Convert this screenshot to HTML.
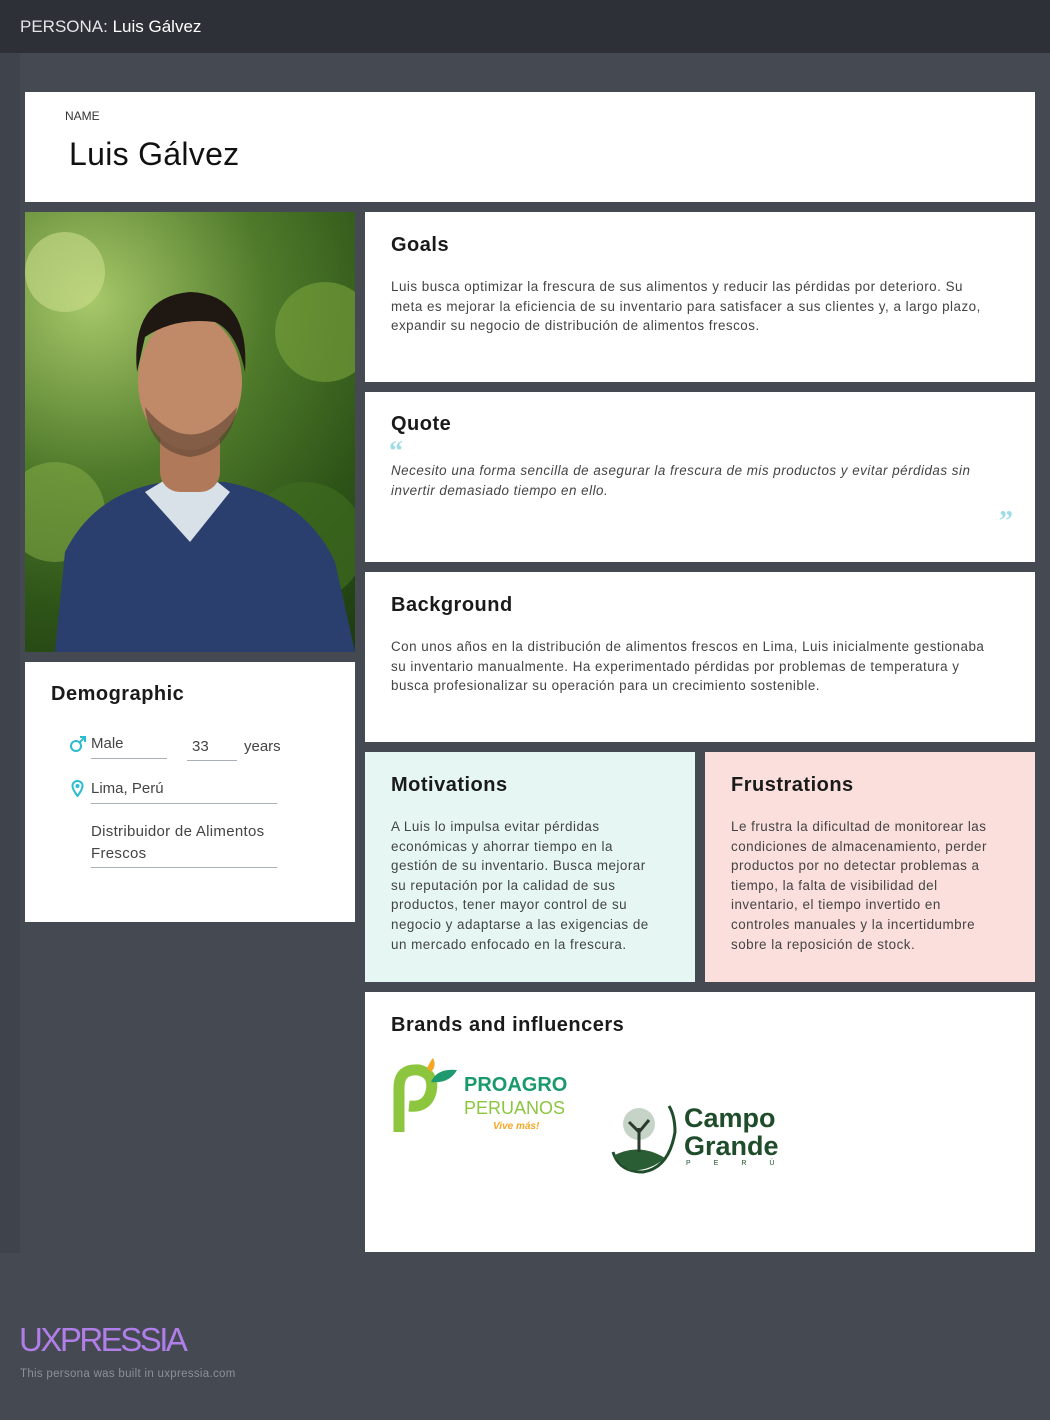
<!DOCTYPE html>
<html><head><meta charset="utf-8"><style>
*{margin:0;padding:0;box-sizing:border-box}
body{width:1050px;height:1420px;background:#454952;font-family:"Liberation Sans","DejaVu Sans",sans-serif;position:relative;overflow:hidden;color:#333}
.hdr{position:absolute;left:0;top:0;width:1050px;height:53px;background:#2e3038;color:#e4e5e8;font-size:17px;padding:17px 20px;font-weight:300}
.hdr span{color:#fff}
.card{position:absolute;background:#fff}
h2{font-size:20px;font-weight:600;color:#1a1a1a;letter-spacing:.5px}
p.t{font-size:13.4px;line-height:19.6px;color:#444;white-space:nowrap;letter-spacing:.5px}
.lbl{font-size:15px;color:#444}
.line{position:absolute;border-bottom:1px solid #aab0b8}
</style></head><body>
<div class="hdr">PERSONA: <span>Luis Gálvez</span></div>
<div style="position:absolute;left:0;top:53px;width:20px;height:1200px;background:#3f434b"></div>

<div class="card" style="left:25px;top:92px;width:1010px;height:110px">
<div style="position:absolute;left:40px;top:17px;font-size:12px;color:#333">NAME</div>
<div style="position:absolute;left:44px;top:44px;font-size:32px;color:#111;letter-spacing:.3px">Luis Gálvez</div>
</div>

<div style="position:absolute;left:25px;top:212px;width:330px;height:440px;overflow:hidden;background:radial-gradient(circle at 20% 20%,#a8c86a,#4f7a2a 40%,#2e5418 70%,#1e3a12)">
<svg width="330" height="440" viewBox="0 0 330 440">
<circle cx="40" cy="60" r="40" fill="#c9dc8a" opacity=".6"/><circle cx="300" cy="120" r="50" fill="#7aa33c" opacity=".6"/><circle cx="280" cy="330" r="60" fill="#3d6b20" opacity=".7"/><circle cx="30" cy="300" r="50" fill="#8ab04a" opacity=".5"/>
<path d="M30 440 L40 340 Q70 280 140 270 L200 270 Q280 285 310 350 L330 440Z" fill="#2a3f6e"/>
<path d="M120 280 L165 330 L205 280 L190 268 L140 268Z" fill="#d8e0e8"/>
<rect x="135" y="210" width="60" height="70" rx="20" fill="#b07a5a"/>
<ellipse cx="165" cy="170" rx="52" ry="68" fill="#c08a68"/>
<path d="M112 160 Q105 85 165 80 Q225 82 220 160 Q212 120 190 110 Q150 105 120 125Z" fill="#1e1712"/>
<path d="M120 195 Q165 250 212 195 Q205 240 165 245 Q125 240 120 195Z" fill="#5a4030" opacity=".6"/>
</svg></div>

<div class="card" style="left:25px;top:662px;width:330px;height:260px">
<h2 style="position:absolute;left:26px;top:21px">Demographic</h2>
<svg style="position:absolute;left:44px;top:73px" width="18" height="18" viewBox="0 0 18 18"><circle cx="7" cy="11" r="5" fill="none" stroke="#2bbcd0" stroke-width="2"/><path d="M10.5 7.5 L16 2 M11 2 H16 V7" fill="none" stroke="#2bbcd0" stroke-width="2"/></svg>
<div class="lbl" style="position:absolute;left:66px;top:73px">Male</div>
<div class="line" style="left:66px;top:96px;width:76px"></div>
<div class="lbl" style="position:absolute;left:167px;top:76px">33</div>
<div class="line" style="left:162px;top:98px;width:50px"></div>
<div class="lbl" style="position:absolute;left:219px;top:76px">years</div>
<svg style="position:absolute;left:46px;top:118px" width="13" height="17" viewBox="0 0 13 17"><path d="M6.5 1C3.5 1 1.5 3.3 1.5 6c0 3.5 5 10 5 10s5-6.5 5-10C11.5 3.3 9.5 1 6.5 1z" fill="none" stroke="#2bbcd0" stroke-width="2"/><circle cx="6.5" cy="6" r="2" fill="#2bbcd0"/></svg>
<div class="lbl" style="position:absolute;left:66px;top:118px">Lima, Perú</div>
<div class="line" style="left:66px;top:141px;width:186px"></div>
<div class="lbl" style="position:absolute;left:66px;top:159px;line-height:22px;letter-spacing:.3px">Distribuidor de Alimentos<br>Frescos</div>
<div class="line" style="left:66px;top:205px;width:186px"></div>
</div>

<div class="card" style="left:365px;top:212px;width:670px;height:170px">
<h2 style="position:absolute;left:26px;top:22px">Goals</h2>
<p class="t" style="position:absolute;left:26px;top:65px">Luis busca optimizar la frescura de sus alimentos y reducir las pérdidas por deterioro. Su<br>meta es mejorar la eficiencia de su inventario para satisfacer a sus clientes y, a largo plazo,<br>expandir su negocio de distribución de alimentos frescos.</p>
</div>

<div class="card" style="left:365px;top:392px;width:670px;height:170px">
<h2 style="position:absolute;left:26px;top:21px">Quote</h2>
<div style="position:absolute;left:24px;top:44px;color:#9fdde6;font-size:28px;font-family:'Liberation Serif',serif;font-weight:bold">“</div>
<p class="t" style="position:absolute;left:26px;top:69px;font-style:italic">Necesito una forma sencilla de asegurar la frescura de mis productos y evitar pérdidas sin<br>invertir demasiado tiempo en ello.</p>
<div style="position:absolute;left:634px;top:114px;color:#9fdde6;font-size:28px;font-family:'Liberation Serif',serif;font-weight:bold">”</div>
</div>

<div class="card" style="left:365px;top:572px;width:670px;height:170px">
<h2 style="position:absolute;left:26px;top:22px">Background</h2>
<p class="t" style="position:absolute;left:26px;top:65px">Con unos años en la distribución de alimentos frescos en Lima, Luis inicialmente gestionaba<br>su inventario manualmente. Ha experimentado pérdidas por problemas de temperatura y<br>busca profesionalizar su operación para un crecimiento sostenible.</p>
</div>

<div class="card" style="left:365px;top:752px;width:330px;height:230px;background:#e6f7f3">
<h2 style="position:absolute;left:26px;top:22px">Motivations</h2>
<p class="t" style="position:absolute;left:26px;top:65px">A Luis lo impulsa evitar pérdidas<br>económicas y ahorrar tiempo en la<br>gestión de su inventario. Busca mejorar<br>su reputación por la calidad de sus<br>productos, tener mayor control de su<br>negocio y adaptarse a las exigencias de<br>un mercado enfocado en la frescura.</p>
</div>
<div class="card" style="left:705px;top:752px;width:330px;height:230px;background:#fadfdc">
<h2 style="position:absolute;left:26px;top:22px">Frustrations</h2>
<p class="t" style="position:absolute;left:26px;top:65px">Le frustra la dificultad de monitorear las<br>condiciones de almacenamiento, perder<br>productos por no detectar problemas a<br>tiempo, la falta de visibilidad del<br>inventario, el tiempo invertido en<br>controles manuales y la incertidumbre<br>sobre la reposición de stock.</p>
</div>

<div class="card" style="left:365px;top:992px;width:670px;height:260px">
<h2 style="position:absolute;left:26px;top:22px">Brands and influencers</h2>
<svg style="position:absolute;left:26px;top:66px" width="70" height="76" viewBox="0 0 70 76"><path d="M8 74 V30 Q8 10 28 12 Q44 16 40 34 Q36 50 18 48" fill="none" stroke="#8cc63f" stroke-width="11"/><path d="M36 10 Q40 2 42 0 Q46 8 40 14Z" fill="#f5a623"/><path d="M40 24 Q46 10 66 12 Q58 26 40 24Z" fill="#1e9a6e"/></svg>
<div style="position:absolute;left:99px;top:82px;font-size:20px;font-weight:bold;color:#1a9a6c">PROAGRO</div>
<div style="position:absolute;left:99px;top:106px;font-size:18px;color:#8cc63f">PERUANOS</div>
<div style="position:absolute;left:128px;top:129px;font-size:10px;font-style:italic;color:#f5a623;font-weight:bold">Vive más!</div>
<svg style="position:absolute;left:244px;top:110px" width="72" height="72" viewBox="0 0 72 72"><path d="M4 50 Q10 70 34 70 Q60 66 66 30 Q66 14 60 4" fill="none" stroke="#1f4d2b" stroke-width="3"/><path d="M4 54 Q30 40 56 56 Q40 70 20 68Z" fill="#2b5d35"/><circle cx="30" cy="22" r="16" fill="#c6d4c8"/><path d="M30 50 V26 M30 30 L20 20 M30 30 L40 18" stroke="#2b3b2e" stroke-width="3"/></svg>
<div style="position:absolute;left:319px;top:112px;font-size:27px;font-weight:bold;color:#1f4d2b;line-height:28px">Campo<br>Grande</div>
<div style="position:absolute;left:321px;top:168px;font-size:7px;color:#1f4d2b;letter-spacing:23px">PERÚ</div>
</div>

<div style="position:absolute;left:19px;top:1321px;font-size:33px;color:#b07ee8;letter-spacing:-2.5px;font-weight:400">UXPRESSIA</div>
<div style="position:absolute;left:20px;top:1368px;font-size:11.5px;color:#8c9099;letter-spacing:.3px">This persona was built in uxpressia.com</div>
</body></html>
